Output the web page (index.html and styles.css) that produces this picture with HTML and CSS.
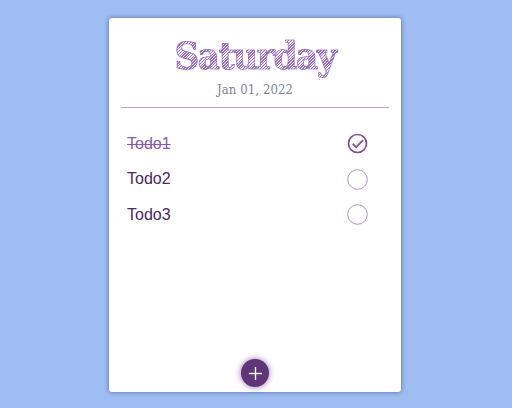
FILE: index.html
```html
<!DOCTYPE html>
<html lang="en">
<head>
<meta charset="utf-8">
<title>Todo</title>
<link rel="stylesheet" href="styles.css">
</head>
<body>
<main class="card">
  <header class="head">
    <h1 class="day">Saturday</h1>
    <p class="date">Jan 01, 2022</p>
  </header>
  <ul class="list">
    <li class="row"><span class="label done">Todo1</span>
      <svg class="check" viewBox="0 0 21 21"><circle class="ring-on" cx="10.5" cy="10.5" r="9"/><path class="tick" d="M5.6 10.6l3.6 3.6 6.8-7"/></svg>
    </li>
    <li class="row"><span class="label">Todo2</span>
      <svg class="check" viewBox="0 0 21 21"><circle class="ring" cx="10.5" cy="10.5" r="9.8"/></svg>
    </li>
    <li class="row"><span class="label">Todo3</span>
      <svg class="check" viewBox="0 0 21 21"><circle class="ring" cx="10.5" cy="10.5" r="9.8"/></svg>
    </li>
  </ul>
  <button class="fab" type="button" aria-label="Add">
    <svg class="plus" viewBox="0 0 13 13"><path d="M6.5 0v13M0 6.5h13"/></svg>
  </button>
</main>
</body>
</html>
```
FILE: styles.css
```css
html, body { margin: 0; height: 100%; }
body {
  background: #9dbdf3;
  display: flex;
  justify-content: center;
  padding: 18px 2px 0 0;
  box-sizing: border-box;
  font-family: "Liberation Sans", Arial, sans-serif;
}
.card {
  width: 292px;
  height: 374px;
  background: #fff;
  border-radius: 3px;
  box-shadow: 0 0 5px rgba(50, 60, 110, .65);
  display: flex;
  flex-direction: column;
  align-items: center;
}
.head {
  width: 268px;
  height: 90px;
  box-sizing: border-box;
  border-bottom: 1px solid #b3a6c4;
  text-align: center;
  padding-top: 14px;
}
.day {
  margin: 0;
  font: 700 38px/48px "DejaVu Serif Condensed", "DejaVu Serif", serif;
  letter-spacing: -1.3px;
  color: transparent;
  -webkit-text-stroke: .6px #8a5bb0;
  background: repeating-linear-gradient(135deg, #9a70bf 0 1px, #f4eefa 1px 2px);
  -webkit-background-clip: text;
  background-clip: text;
}
.date {
  margin: 1px 0 0;
  font: 400 13px/18px "DejaVu Serif Condensed", "DejaVu Serif", serif;
  letter-spacing: .1px;
  color: #7f7f9f;
}
.list {
  list-style: none;
  margin: 18px 0 0;
  padding: 0;
  width: 264px;
  flex: 1;
}
.row {
  height: 35.5px;
  display: flex;
  align-items: center;
  justify-content: space-between;
  padding: 0 19px 0 4px;
  box-sizing: border-box;
}
.label { font-size: 16px; color: #4a2668; }
.done { color: #8a5aa6; text-decoration: line-through; }
.check { width: 21px; height: 21px; fill: none; }
.ring { stroke: #b58fcb; stroke-width: 1; }
.ring-on, .tick { stroke: #7f4f9c; stroke-width: 1.7; }
.fab {
  width: 28px;
  height: 28px;
  margin-bottom: 5px;
  padding: 0;
  border: 0;
  border-radius: 50%;
  background: #5f3478;
  box-shadow: 0 0 6px rgba(100, 55, 130, .7);
  display: flex;
  align-items: center;
  justify-content: center;
}
.plus { width: 13px; height: 13px; fill: none; stroke: #fff; stroke-width: 1.4; }
```
